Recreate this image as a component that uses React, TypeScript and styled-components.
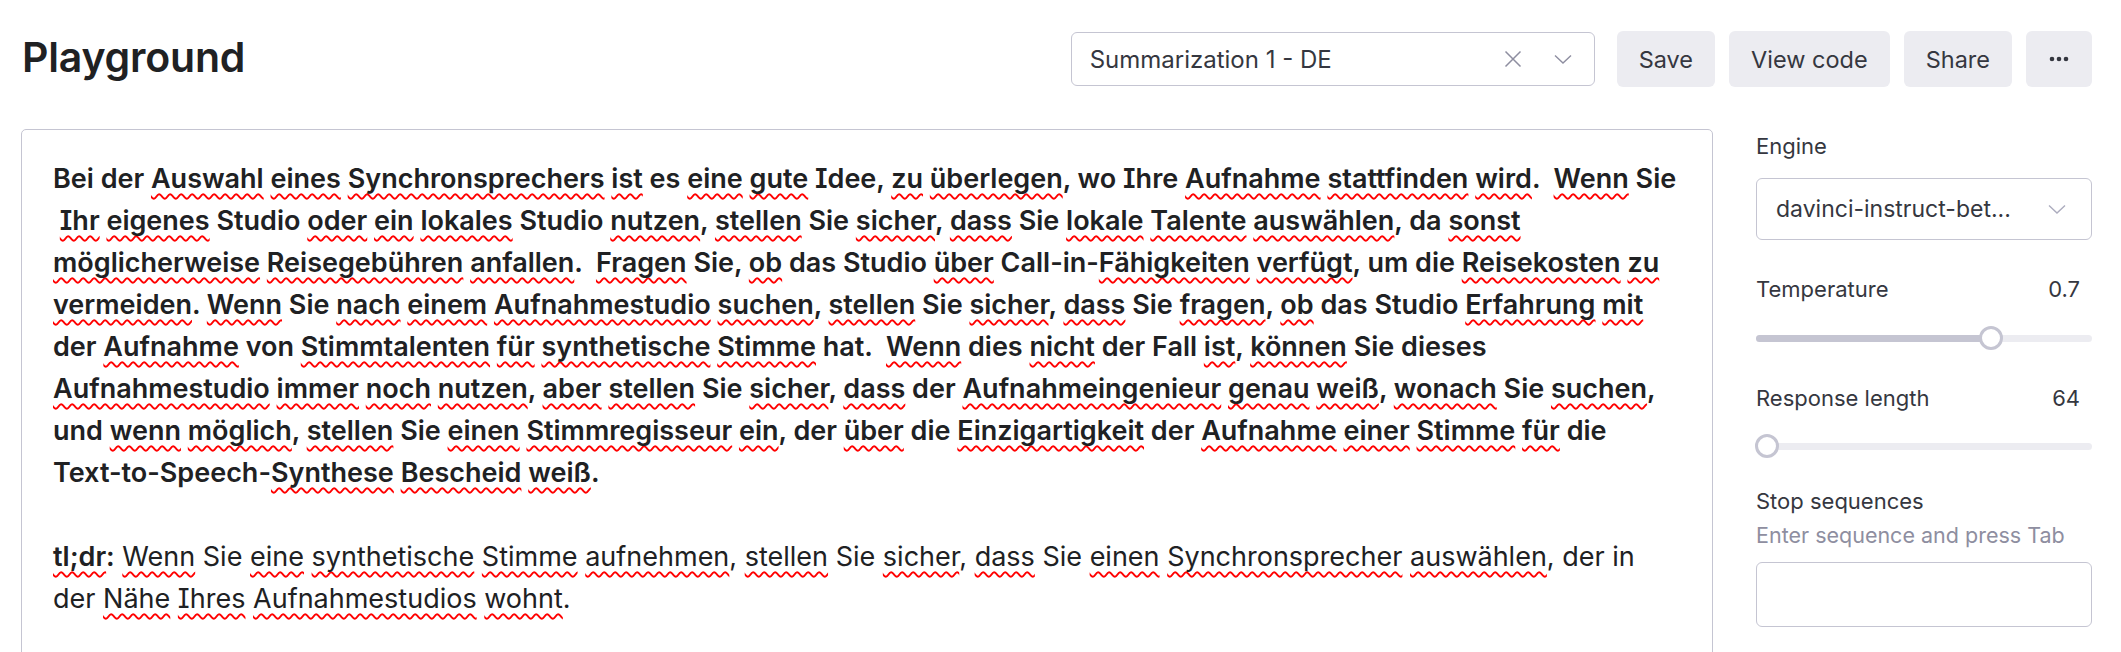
import React from "react";
import styled, { createGlobalStyle } from "styled-components";

const GlobalStyle = createGlobalStyle`
  html, body { margin: 0; padding: 0; background: #ffffff; }
  body {
    font-family: Inter, "Noto Sans", "Liberation Sans", sans-serif;
    color: #353740;
    overflow: hidden;
  }
  * { box-sizing: border-box; }
`;

const Page = styled.div`
  width: 2121px;
  height: 652px;
  overflow: hidden;
  padding: 31px 29px 0 21px;
`;

const Header = styled.header`
  display: flex;
  align-items: center;
  height: 56px;
`;

const Title = styled.h1`
  flex: 1;
  margin: 0 0 5px 1px;
  font-size: 41px;
  line-height: 56px;
  font-weight: 600;
  color: #202123;
  letter-spacing: -0.2px;
`;

const PresetSelect = styled.div`
  width: 524px;
  height: 54px;
  margin-right: 22px;
  display: flex;
  align-items: center;
  gap: 30px;
  padding: 0 21px 0 18px;
  border: 1px solid #c5c5d2;
  border-radius: 6px;
  font-size: 24px;
  color: #353740;
`;

const SelectText = styled.span`
  flex: 1;
  white-space: nowrap;
  overflow: hidden;
`;

const Actions = styled.div`
  display: flex;
  gap: 14px;
`;

const Button = styled.button<{ $square?: boolean }>`
  height: 56px;
  padding: ${(p) => (p.$square ? "0" : "0 22px")};
  width: ${(p) => (p.$square ? "66px" : "auto")};
  display: flex;
  align-items: center;
  justify-content: center;
  border: none;
  border-radius: 6px;
  background: #ececf1;
  color: #353740;
  font-family: inherit;
  font-size: 23.5px;
  cursor: pointer;
`;

const Body = styled.main`
  display: flex;
  gap: 43px;
  margin-top: 42px;
`;

const Editor = styled.div`
  flex: 1;
  height: 600px;
  border: 1px solid #c5c5d2;
  border-radius: 5px;
  padding: 28px 31px;
  font-size: 27px;
  line-height: 42px;
  color: #202123;
  font-feature-settings: "cv08" 1;
`;

const Line = styled.div<{ $weight?: number }>`
  white-space: pre;
  font-weight: ${(p) => p.$weight ?? 600};
  height: 42px;
`;

const Misspelled = styled.span`
  text-decoration: underline wavy #ff0000;
  text-decoration-thickness: 1.5px;
  text-underline-offset: 5px;
  text-decoration-skip-ink: none;
`;

const Strong = styled.span`
  font-weight: 600;
`;

const Sidebar = styled.aside`
  width: 336px;
  display: flex;
  flex-direction: column;
  padding-top: 2px;
`;

const FieldLabel = styled.div<{ $mt?: number }>`
  display: flex;
  justify-content: space-between;
  padding-right: 12px;
  margin-top: ${(p) => p.$mt ?? 0}px;
  font-size: 22px;
  line-height: 30px;
  color: #353740;
`;

const Hint = styled.div`
  font-size: 21.5px;
  line-height: 38px;
  color: #8e8ea0;
  white-space: nowrap;
`;

const EngineSelect = styled.div`
  margin-top: 17px;
  height: 62px;
  display: flex;
  align-items: center;
  justify-content: space-between;
  padding: 0 24px 0 19px;
  border: 1px solid #c5c5d2;
  border-radius: 6px;
  font-size: 23px;
  color: #353740;
`;

const SliderRow = styled.div<{ $mt: number }>`
  margin-top: ${(p) => p.$mt}px;
  height: 24px;
  display: flex;
  align-items: center;
`;

const Track = styled.div`
  position: relative;
  width: 100%;
  height: 7px;
  border-radius: 4px;
  background: #ececf1;
`;

const Fill = styled.div`
  height: 100%;
  border-radius: 4px;
  background: #c5c5d2;
`;

const Thumb = styled.div`
  position: absolute;
  top: 50%;
  width: 24px;
  height: 24px;
  margin-left: -12px;
  margin-top: -12px;
  border-radius: 50%;
  background: #ffffff;
  border: 3px solid #c5c5d2;
`;

const StopInput = styled.div`
  margin-top: 8px;
  height: 65px;
  border: 1px solid #c5c5d2;
  border-radius: 6px;
`;

const Chevron = ({ color = "#8e8ea0" }: { color?: string }) => (
  <svg width="20" height="20" viewBox="0 0 20 20" fill="none">
    <path d="M2 6.5 L10 14 L18 6.5" stroke={color} strokeWidth="1.4" />
  </svg>
);

const Cross = () => (
  <svg width="20" height="20" viewBox="0 0 20 20" fill="none">
    <path d="M2.5 2.5 L17.5 17.5 M17.5 2.5 L2.5 17.5" stroke="#8e8ea0" strokeWidth="1.5" />
  </svg>
);

const Dots = () => (
  <svg width="20" height="6" viewBox="0 0 20 6" fill="#353740">
    <circle cx="3" cy="3" r="2.3" />
    <circle cx="10" cy="3" r="2.3" />
    <circle cx="17" cy="3" r="2.3" />
  </svg>
);

const renderMarked = (text: string) =>
  text.split(/(~[^~]+~)/).map((part, i) =>
    part.startsWith("~") && part.endsWith("~") ? (
      <Misspelled key={i}>{part.slice(1, -1)}</Misspelled>
    ) : (
      <React.Fragment key={i}>{part}</React.Fragment>
    )
  );

const paragraph = [
  "Bei der ~Auswahl~ ~eines~ ~Synchronsprechers~ ~ist~ es ~eine~ ~gute~ Idee, ~zu~ ~überlegen~, wo Ihre ~Aufnahme~ ~stattfinden~ ~wird~.  ~Wenn~ Sie",
  " ~Ihr~ ~eigenes~ Studio ~oder~ ~ein~ ~lokales~ Studio ~nutzen~, ~stellen~ Sie ~sicher~, ~dass~ Sie ~lokale~ ~Talente~ ~auswählen~, da ~sonst~",
  "~möglicherweise~ ~Reisegebühren~ ~anfallen~.  ~Fragen~ Sie, ~ob~ das Studio ~über~ Call-in-~Fähigkeiten~ ~verfügt~, um die ~Reisekosten~ ~zu~",
  "~vermeiden~. ~Wenn~ Sie ~nach~ ~einem~ ~Aufnahmestudio~ ~suchen~, ~stellen~ Sie ~sicher~, ~dass~ Sie ~fragen~, ~ob~ das Studio ~Erfahrung~ ~mit~",
  "der ~Aufnahme~ von ~Stimmtalenten~ ~für~ ~synthetische~ ~Stimme~ hat.  ~Wenn~ dies ~nicht~ der Fall ~ist~, ~können~ Sie dieses",
  "~Aufnahmestudio~ ~immer~ ~noch~ ~nutzen~, ~aber~ ~stellen~ Sie ~sicher~, ~dass~ der ~Aufnahmeingenieur~ ~genau~ ~weiß~, ~wonach~ Sie ~suchen~,",
  "und ~wenn~ ~möglich~, ~stellen~ Sie ~einen~ ~Stimmregisseur~ ~ein~, der ~über~ die ~Einzigartigkeit~ der ~Aufnahme~ ~einer~ ~Stimme~ ~für~ die",
  "Text-to-Speech-~Synthese~ ~Bescheid~ ~weiß~.",
];

const summary = [
  " ~Wenn~ Sie ~eine~ ~synthetische~ ~Stimme~ ~aufnehmen~, ~stellen~ Sie ~sicher~, ~dass~ Sie ~einen~ ~Synchronsprecher~ ~auswählen~, der in",
  "der ~Nähe~ ~Ihres~ ~Aufnahmestudios~ ~wohnt~.",
];

const Slider = ({ value, max, mt }: { value: number; max: number; mt: number }) => {
  const pct = (value / max) * 100;
  return (
    <SliderRow $mt={mt}>
      <Track>
        <Fill style={{ width: `${pct}%` }} />
        <Thumb style={{ left: `${pct}%` }} />
      </Track>
    </SliderRow>
  );
};

export default function App() {
  return (
    <>
      <GlobalStyle />
      <Page>
        <Header>
          <Title>Playground</Title>
          <PresetSelect>
            <SelectText>Summarization 1 - DE</SelectText>
            <Cross />
            <Chevron />
          </PresetSelect>
          <Actions>
            <Button>Save</Button>
            <Button>View code</Button>
            <Button>Share</Button>
            <Button $square aria-label="More">
              <Dots />
            </Button>
          </Actions>
        </Header>
        <Body>
          <Editor spellCheck>
            {paragraph.map((l, i) => (
              <Line key={i}>{renderMarked(l)}</Line>
            ))}
            <Line />
            <Line $weight={400}>
              <Strong>
                <Misspelled>tl;dr</Misspelled>:
              </Strong>
              {renderMarked(summary[0])}
            </Line>
            <Line $weight={400}>{renderMarked(summary[1])}</Line>
          </Editor>
          <Sidebar>
            <FieldLabel>Engine</FieldLabel>
            <EngineSelect>
              <span>davinci-instruct-bet...</span>
              <Chevron color="#acacbe" />
            </EngineSelect>
            <FieldLabel $mt={34}>
              <span>Temperature</span>
              <span>0.7</span>
            </FieldLabel>
            <Slider value={0.7} max={1} mt={22} />
            <FieldLabel $mt={33}>
              <span>Response length</span>
              <span>64</span>
            </FieldLabel>
            <Slider value={64} max={2048} mt={21} />
            <FieldLabel $mt={28}>Stop sequences</FieldLabel>
            <Hint>Enter sequence and press Tab</Hint>
            <StopInput />
          </Sidebar>
        </Body>
      </Page>
    </>
  );
}
